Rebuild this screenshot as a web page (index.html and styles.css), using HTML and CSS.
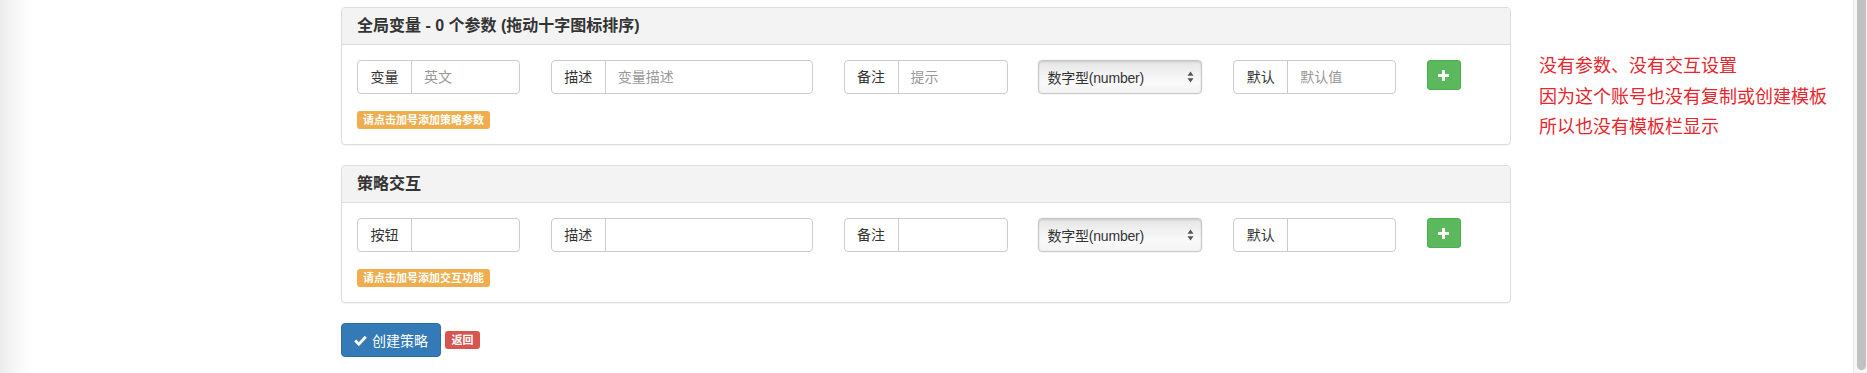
FILE: index.html
```html
<!DOCTYPE html>
<html lang="zh-CN">
<head>
<meta charset="utf-8">
<title>策略编辑</title>
<link rel="stylesheet" href="styles.css">
</head>
<body>
<div class="window">
  <div class="page">
    <div class="main">
      <div class="panel">
        <div class="panel-heading">全局变量 - 0 个参数 (拖动十字图标排序)</div>
        <div class="panel-body">
          <div class="form-row">
            <div class="input-group g-name"><span class="addon">变量</span><span class="field ph">英文</span></div>
            <div class="input-group g-desc"><span class="addon">描述</span><span class="field ph">变量描述</span></div>
            <div class="input-group g-small"><span class="addon">备注</span><span class="field ph">提示</span></div>
            <div class="select"><span>数字型(number)</span><svg class="arrows" width="7" height="12" viewBox="0 0 7 12"><path d="M3.5 0.5 L6.5 4.8 L0.5 4.8 Z M3.5 11.5 L6.5 7.2 L0.5 7.2 Z" fill="#555"/></svg></div>
            <div class="input-group g-last"><span class="addon">默认</span><span class="field ph">默认值</span></div>
            <button class="btn-plus" type="button"><svg width="11" height="11" viewBox="0 0 11 11"><path d="M4 0 H7 V4 H11 V7 H7 V11 H4 V7 H0 V4 H4 Z" fill="#fff"/></svg></button>
          </div>
          <span class="label label-warning">请点击加号添加策略参数</span>
        </div>
      </div>

      <div class="panel">
        <div class="panel-heading">策略交互</div>
        <div class="panel-body">
          <div class="form-row">
            <div class="input-group g-name"><span class="addon">按钮</span><span class="field"></span></div>
            <div class="input-group g-desc"><span class="addon">描述</span><span class="field"></span></div>
            <div class="input-group g-small"><span class="addon">备注</span><span class="field"></span></div>
            <div class="select"><span>数字型(number)</span><svg class="arrows" width="7" height="12" viewBox="0 0 7 12"><path d="M3.5 0.5 L6.5 4.8 L0.5 4.8 Z M3.5 11.5 L6.5 7.2 L0.5 7.2 Z" fill="#555"/></svg></div>
            <div class="input-group g-last"><span class="addon">默认</span><span class="field"></span></div>
            <button class="btn-plus" type="button"><svg width="11" height="11" viewBox="0 0 11 11"><path d="M4 0 H7 V4 H11 V7 H7 V11 H4 V7 H0 V4 H4 Z" fill="#fff"/></svg></button>
          </div>
          <span class="label label-warning">请点击加号添加交互功能</span>
        </div>
      </div>

      <div class="actions">
        <button class="btn-primary" type="button"><svg class="ok" width="13" height="11" viewBox="0 0 13 11"><path d="M1.2 5.6 L4.8 9.2 L11.8 1.8" fill="none" stroke="#fff" stroke-width="2.8"/></svg>创建策略</button>
        <span class="label label-danger">返回</span>
      </div>
    </div>

    <div class="notes">
      <p>没有参数、没有交互设置</p>
      <p>因为这个账号也没有复制或创建模板</p>
      <p>所以也没有模板栏显示</p>
    </div>
  </div>
  <div class="scrollbar"><div class="thumb"></div></div>
</div>
</body>
</html>
```

FILE: styles.css
```css
html, body {
  margin: 0;
  padding: 0;
  height: 373px;
  overflow: hidden;
}

body {
  font-family: "Liberation Sans", "Noto Sans CJK SC", sans-serif;
  font-size: 14px;
  color: #333;
  background: #fff;
}

.window {
  display: flex;
  height: 373px;
}

.page {
  flex: 1;
  display: flex;
  align-items: flex-start;
  padding: 7px 0 0 341px;
  background: linear-gradient(to right, #ebebeb 0, #f3f3f3 10px, #fbfbfb 22px, #fff 34px);
}

.main {
  width: 1170px;
  flex: none;
}

.panel {
  border: 1px solid #ddd;
  border-radius: 4px;
  margin-bottom: 20px;
  background: #fff;
  box-shadow: 0 1px 1px rgba(0, 0, 0, 0.04);
}

.panel-heading {
  background: #f3f3f3;
  border-bottom: 1px solid #ddd;
  border-radius: 3px 3px 0 0;
  height: 36px;
  line-height: 36px;
  padding: 0 15px;
  font-size: 16px;
  font-weight: bold;
  color: #333;
}

.panel-body {
  padding: 15px;
}

.form-row {
  display: flex;
  align-items: flex-start;
  gap: 30.8px;
  margin-bottom: 17px;
}

.input-group {
  display: flex;
  height: 34px;
  box-sizing: border-box;
  border: 1px solid #ccc;
  border-radius: 4px;
  background: #fff;
}

.g-name { width: 163px; }
.g-desc { width: 262px; }
.g-small { width: 164px; }
.g-last { width: 163px; }

.addon {
  width: 54px;
  flex: none;
  box-sizing: border-box;
  border-right: 1px solid #ccc;
  line-height: 32px;
  text-align: center;
  color: #333;
  font-size: 14px;
}

.field {
  flex: 1;
  line-height: 32px;
  font-size: 14px;
  padding-left: 12px;
}

.ph { color: #999; }

.select {
  width: 164px;
  height: 34px;
  flex: none;
  box-sizing: border-box;
  border: 1px solid #c8c8c8;
  border-radius: 4px;
  display: flex;
  align-items: center;
  justify-content: space-between;
  padding: 0 7px 0 8px;
  background: linear-gradient(to bottom, #e4e4e4 0, #f1f1f1 35%, #fafafa 70%, #f2f2f2 100%);
  box-shadow: inset 0 1px 2px rgba(0, 0, 0, 0.12), 0 0 2px rgba(0, 0, 0, 0.12);
  color: #333;
  font-size: 14px;
  letter-spacing: -0.2px;
}

.arrows { display: block; }

.btn-plus {
  width: 34px;
  height: 30px;
  flex: none;
  padding: 0;
  border: 1px solid #4cae4c;
  border-radius: 3px;
  background: #5cb85c;
  display: flex;
  align-items: center;
  justify-content: center;
}

.label {
  display: inline-block;
  height: 18px;
  line-height: 18px;
  padding: 0 6px;
  border-radius: 3px;
  font-size: 11px;
  font-weight: bold;
  color: #fff;
  vertical-align: top;
}

.label-warning { background: #f0ad4e; }
.label-danger { background: #d9534f; padding: 0 6.5px; }

.actions {
  display: flex;
  align-items: center;
  gap: 4px;
}

.btn-primary {
  height: 34px;
  width: 100px;
  box-sizing: border-box;
  border: 1px solid #2e6da4;
  border-radius: 4px;
  background: #337ab7;
  color: #fff;
  font-family: "Liberation Sans", "Noto Sans CJK SC", sans-serif;
  font-size: 14px;
  padding: 0 12px;
  display: flex;
  align-items: center;
  gap: 5px;
}

.ok { display: block; flex: none; }

.notes {
  margin-left: 28px;
  padding-top: 44px;
  color: #e8262d;
  font-size: 18px;
  white-space: nowrap;
}

.notes p {
  margin: 0;
  line-height: 30.5px;
}

.scrollbar {
  width: 14px;
  flex: none;
  height: 373px;
  box-sizing: border-box;
  background: #f7f7f7;
  border-left: 1px solid #e6e6e6;
  padding: 0 2px 3px 2px;
}

.thumb {
  height: 100%;
  width: 9px;
  margin-left: 1px;
  background: #c1c1c1;
  border-radius: 0 0 5px 5px;
}
```
